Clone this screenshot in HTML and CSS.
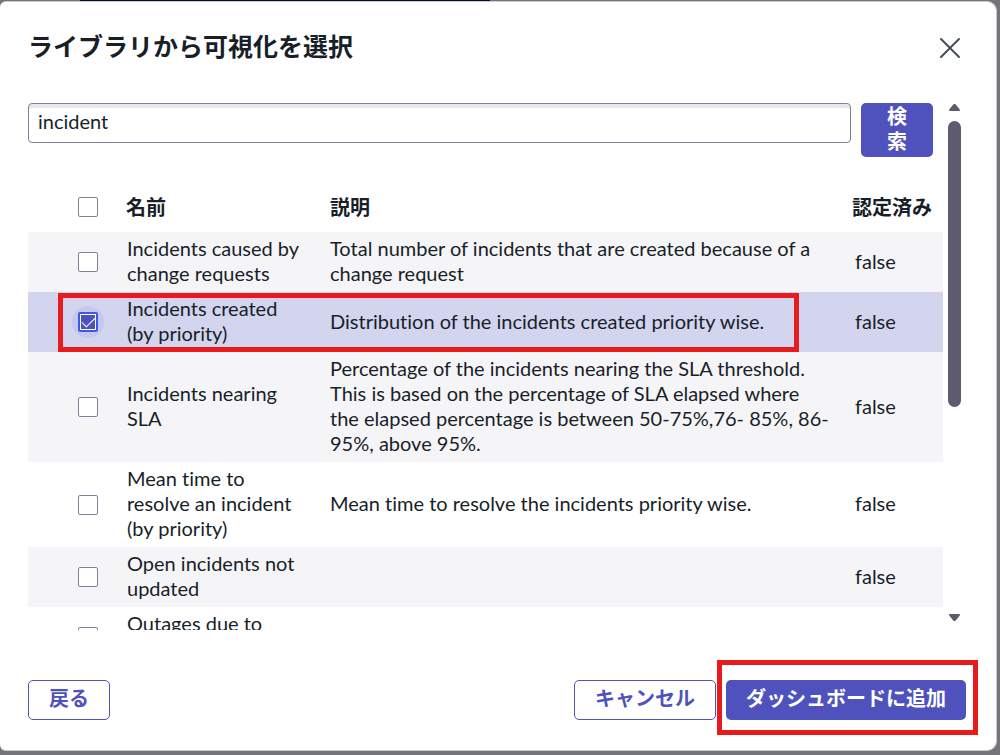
FILE: index.html
```html
<!DOCTYPE html>
<html lang="ja">
<head>
    <meta charset="UTF-8">
    <meta name="viewport" content="width=device-width, initial-scale=1.0">
    <title>ライブラリから可視化を選択</title>
    <link rel="stylesheet" href="styles.css">
</head>
<body>
    <div class="page-behind"></div>
    <div class="modal" role="dialog" aria-labelledby="modal-title">
        <header class="modal-header">
            <h1 id="modal-title">ライブラリから可視化を選択</h1>
            <button type="button" class="close" aria-label="閉じる">
                <svg width="22" height="22" viewBox="0 0 22 22">
                    <path d="M2 2L20 20M20 2L2 20" fill="none" stroke="#464c5e" stroke-width="2" stroke-linecap="round"/>
                </svg>
            </button>
        </header>

        <div class="modal-body">
            <div class="content">
                <form class="search">
                    <input type="text" class="search-input" name="q" value="incident" aria-label="検索">
                    <button type="button" class="btn btn-primary btn-search">検索</button>
                </form>
                <table class="library">
                    <colgroup>
                        <col class="col-check">
                        <col class="col-name">
                        <col>
                        <col class="col-certified">
                    </colgroup>
                    <thead>
                        <tr>
                            <th class="check"><input type="checkbox" aria-label="すべて選択"></th>
                            <th>名前</th>
                            <th>説明</th>
                            <th>認定済み</th>
                        </tr>
                    </thead>
                    <tbody>
                        <tr>
                            <td class="check"><input type="checkbox" id="row1"></td>
                            <td><label for="row1">Incidents caused by change requests</label></td>
                            <td>Total number of incidents that are created because of a change request</td>
                            <td>false</td>
                        </tr>
                        <tr class="selected">
                            <td class="check"><input type="checkbox" id="row2" checked></td>
                            <td><label for="row2">Incidents created (by priority)</label></td>
                            <td>Distribution of the incidents created priority wise.</td>
                            <td>false</td>
                        </tr>
                        <tr>
                            <td class="check"><input type="checkbox" id="row3"></td>
                            <td><label for="row3">Incidents nearing SLA</label></td>
                            <td>Percentage of the incidents nearing the SLA threshold. This is based on the percentage of SLA elapsed where the elapsed percentage is between 50-75%,76- 85%, 86-95%, above 95%.</td>
                            <td>false</td>
                        </tr>
                        <tr>
                            <td class="check"><input type="checkbox" id="row4"></td>
                            <td><label for="row4">Mean time to resolve an incident (by priority)</label></td>
                            <td>Mean time to resolve the incidents priority wise.</td>
                            <td>false</td>
                        </tr>
                        <tr>
                            <td class="check"><input type="checkbox" id="row5"></td>
                            <td><label for="row5">Open incidents not updated</label></td>
                            <td></td>
                            <td>false</td>
                        </tr>
                        <tr>
                            <td class="check"><input type="checkbox" id="row6"></td>
                            <td><label for="row6">Outages due to changes</label></td>
                            <td>Percentage of outages from</td>
                            <td></td>
                        </tr>
                    </tbody>
                </table>
            </div>
            <div class="scrollbar" aria-hidden="true">
                <svg width="13" height="18" viewBox="0 0 13 18"><path d="M2 7L6 2H7L11 7Z" fill="#5d5b6d" stroke="#5d5b6d" stroke-width="2" stroke-linejoin="round"/></svg>
                <div class="track"><div class="thumb"></div><div class="rest"></div></div>
                <svg width="13" height="18" viewBox="0 0 13 18"><path d="M2 3L6 8H7L11 3Z" fill="#5d5b6d" stroke="#5d5b6d" stroke-width="2" stroke-linejoin="round"/></svg>
            </div>
        </div>

        <footer class="modal-footer">
            <button type="button" class="btn btn-outline">戻る</button>
            <div class="actions">
                <button type="button" class="btn btn-outline">キャンセル</button>
                <div class="marked">
                    <button type="button" class="btn btn-primary">ダッシュボードに追加</button>
                </div>
            </div>
        </footer>
    </div>
</body>
</html>
```
FILE: styles.css
```css
* {
    box-sizing: border-box;
}
body {
    margin: 0;
    height: 100vh;
    padding: 1px 3px 4px 0;
    display: flex;
    overflow: hidden;
    background: #757476;
    color: #181f29;
    font-family: Lato, "Noto Sans CJK JP", sans-serif;
    font-size: 20px;
    line-height: 25px;
    font-variant-ligatures: none;
}
/* strip of the page header left visible above the dialog */
.page-behind {
    position: absolute;
    top: 0;
    left: 8%;
    width: 41%;
    height: 1px;
    background: #04101f;
}
.modal {
    flex: 1;
    display: flex;
    flex-direction: column;
    min-width: 0;
    padding: 26px 30px 30px 28px;
    background: #fff;
    border: solid #c9cbd6;
    border-width: 1px 1px 1px 0;
    border-radius: 6px 10px 10px 6px;
}
.modal-header {
    display: flex;
    justify-content: space-between;
    align-items: center;
    height: 40px;
    margin-bottom: 35px;
}
h1 {
    margin: 0;
    padding-bottom: 4px;
    font-size: 25px;
    line-height: 36px;
    font-weight: 700;
}
.close {
    display: flex;
    padding: 5px;
    border: none;
    background: none;
    cursor: pointer;
}
.modal-body {
    flex: 1;
    display: flex;
    min-height: 0;
    gap: 5px;
    padding-right: 5px;
}
.content {
    flex: 1;
    min-width: 0;
    overflow: hidden;
}
.search {
    display: flex;
    align-items: flex-start;
    gap: 10px;
    margin: 0 10px 25px 0;
}
.search-input {
    flex: 1;
    min-width: 0;
    height: 40px;
    padding: 0 9px 4px;
    border: 1px solid #7d8296;
    border-radius: 4px;
    box-shadow: inset 0 4px 0 #e8e8ea;
    background: #fff;
    color: inherit;
    font: inherit;
}
.btn {
    height: 40px;
    padding: 0 20px 3px;
    border: none;
    border-radius: 5px;
    font: inherit;
    font-weight: 700;
    white-space: nowrap;
    cursor: pointer;
}
.btn-primary {
    background: #4f52bd;
    color: #fff;
}
.btn-outline {
    background: #fff;
    border: 1px solid #4f52bd;
    color: #4f52bd;
}
.btn-search {
    width: 72px;
    height: 54px;
    white-space: normal;
}
.library {
    width: 100%;
    table-layout: fixed;
    border-collapse: collapse;
}
.col-check {
    width: 98px;
}
.col-name {
    width: 204px;
}
.col-certified {
    width: 91px;
}
th {
    height: 50px;
    padding: 0;
    text-align: left;
}
td {
    padding: 4px 24px 6px 1px;
}
td:nth-child(3) {
    padding-right: 20px;
    padding-left: 0;
}
td:last-child {
    padding-right: 0;
    padding-left: 3px;
}
.library .check {
    padding: 0 0 0 50px;
}
tbody tr {
    height: 60px;
}
tbody tr:nth-child(odd) {
    background: #f5f5f8;
}
tbody .selected {
    position: relative;
    z-index: 0;
    background: #d3d4ee;
}
/* red callouts */
.selected .check::after,
.marked::after {
    content: "";
    position: absolute;
    border: 5px solid #e81a1c;
    pointer-events: none;
}
.selected .check::after {
    inset: 1px 144px 0 30px;
}
.marked {
    position: relative;
}
.marked::after {
    inset: -20px -12px -15px -9px;
}
input[type="checkbox"] {
    appearance: none;
    display: block;
    width: 20px;
    height: 20px;
    margin: 0;
    border: 1px solid #7d8296;
    border-radius: 2px;
    background: #fff;
}
input[type="checkbox"]:checked {
    border: 2px solid #3c59e7;
    background: #4f52bd;
    box-shadow: inset 0 0 0 1px #fff;
    position: relative;
}
input[type="checkbox"]:checked::before {
    content: "";
    position: absolute;
    z-index: -1;
    inset: -8px;
    border-radius: 50%;
    background: #c6c8ee;
}
input[type="checkbox"]:checked::after {
    content: "";
    position: absolute;
    top: 3px;
    left: 2px;
    width: 12px;
    height: 6px;
    border: solid #fff;
    border-width: 0 0 1px 1px;
    transform: rotate(-45deg);
}
.scrollbar {
    display: flex;
    flex-direction: column;
    width: 13px;
}
.track {
    flex: 1;
    display: flex;
    flex-direction: column;
}
.thumb {
    flex: 7;
    border-radius: 7px;
    background: #5d5b6d;
}
.rest {
    flex: 5;
}
.modal-footer {
    display: flex;
    justify-content: space-between;
    margin-top: 50px;
}
.actions {
    display: flex;
    gap: 10px;
}
```
